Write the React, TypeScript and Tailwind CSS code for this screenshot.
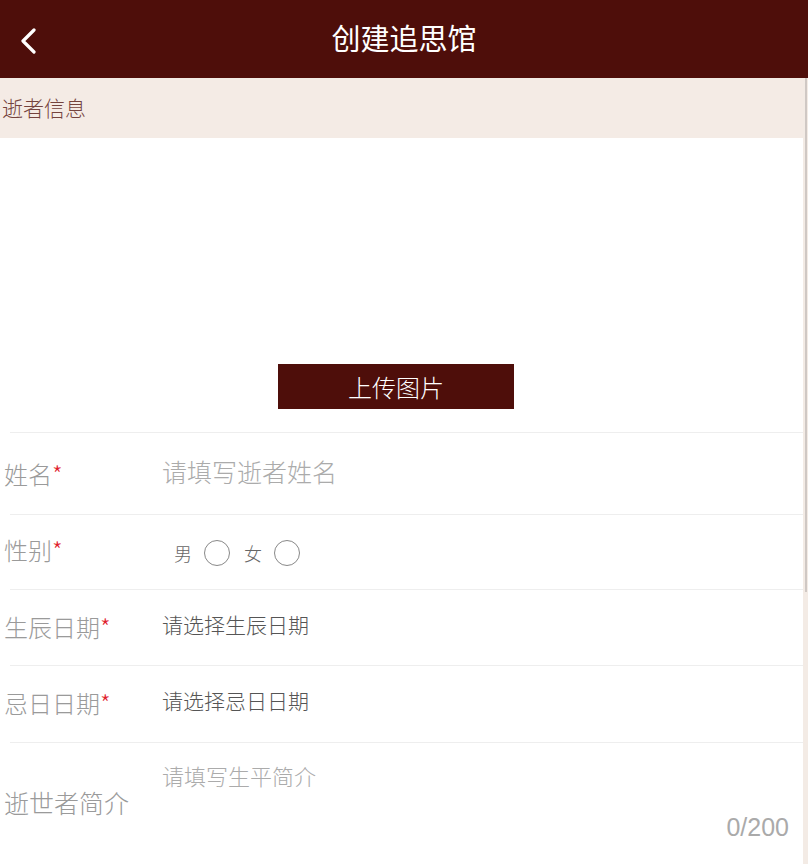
import { useState } from 'react';

const CJK = "font-['Noto_Sans_CJK_SC','Noto_Sans',sans-serif]";

function Label({ text, required }: { text: string; required?: boolean }) {
  return (
    <span className="w-[158px] shrink-0 pl-[4px] text-[24px] font-light text-[#9a9a9a]">
      {text}
      {required && <span className="text-[#e0202a]">*</span>}
    </span>
  );
}

function Radio({ label, checked, onClick }: { label: string; checked: boolean; onClick: () => void }) {
  return (
    <button type="button" onClick={onClick} className="flex items-center gap-[12px]">
      <span className="text-[18px] font-light text-[#666]">{label}</span>
      <span className="flex h-[26px] w-[26px] items-center justify-center rounded-full border border-[#888]">
        {checked && <span className="h-[14px] w-[14px] rounded-full bg-[#4e0e0a]" />}
      </span>
    </button>
  );
}

export default function App() {
  const [gender, setGender] = useState('');
  const [name, setName] = useState('');
  const [bio, setBio] = useState('');

  return (
    <div className={`${CJK} flex h-[864px] w-[808px] flex-col overflow-hidden bg-white`}>
      <header className="relative flex h-[78px] shrink-0 items-center justify-center bg-[#4e0e0a]">
        <button type="button" className="absolute left-[16px] top-[26px] p-[2px]">
          <svg width="22" height="26" viewBox="0 0 22 26" fill="none">
            <path d="M16 2 L5 13 L16 24" stroke="white" strokeWidth="3.2" strokeLinecap="round" strokeLinejoin="round" />
          </svg>
        </button>
        <h1 className="-mt-[2px] text-[29px] font-normal text-white">创建追思馆</h1>
      </header>

      <div className="flex min-h-0 flex-1">
        <main className="flex min-w-0 flex-1 flex-col">
          <div className="flex h-[60px] shrink-0 items-center bg-[#f4ebe5] pl-[2px] text-[21px] font-light text-[#74433d]">
            逝者信息
          </div>

          <div className="flex h-[294px] shrink-0 flex-col items-center justify-end pb-[23px] pr-[11px]">
            <button type="button" className="h-[45px] w-[236px] bg-[#4e0e0a] text-[24px] font-light text-white">
              上传图片
            </button>
          </div>

          <div className="ml-[10px] border-t border-[#eeeeee]" />
          <div className="flex h-[81px] items-center">
            <Label text="姓名" required />
            <input
              value={name}
              onChange={(e) => setName(e.target.value)}
              placeholder="请填写逝者姓名"
              className="-mt-[4px] min-w-0 flex-1 bg-transparent pl-[4px] text-[25px] font-light text-[#333] outline-none placeholder:text-[#ababab]"
            />
          </div>

          <div className="ml-[10px] border-t border-[#eeeeee]" />
          <div className="flex h-[74px] items-center pb-[4px]">
            <Label text="性别" required />
            <div className="flex items-center gap-[14px] pl-[16px] pt-[6px]">
              <Radio label="男" checked={gender === 'm'} onClick={() => setGender('m')} />
              <Radio label="女" checked={gender === 'f'} onClick={() => setGender('f')} />
            </div>
          </div>

          <div className="ml-[10px] border-t border-[#eeeeee]" />
          <div className="flex h-[75px] items-center pb-[2px]">
            <Label text="生辰日期" required />
            <span className="-mt-[4px] pl-[4px] text-[21px] font-light text-[#555]">请选择生辰日期</span>
          </div>

          <div className="ml-[10px] border-t border-[#eeeeee]" />
          <div className="flex h-[76px] items-center pb-[2px]">
            <Label text="忌日日期" required />
            <span className="-mt-[4px] pl-[4px] text-[21px] font-light text-[#555]">请选择忌日日期</span>
          </div>

          <div className="ml-[10px] border-t border-[#eeeeee]" />
          <div className="flex flex-1 items-start">
            <span className="mt-[41px] w-[158px] shrink-0 pl-[4px] text-[25px] font-light text-[#9a9a9a]">
              逝世者简介
            </span>
            <div className="flex flex-1 flex-col pr-[14px] pt-[16px]">
              <textarea
                value={bio}
                maxLength={200}
                onChange={(e) => setBio(e.target.value)}
                placeholder="请填写生平简介"
                className="h-[50px] resize-none bg-transparent pl-[4px] text-[22px] font-light text-[#333] outline-none placeholder:text-[#ababab]"
              />
              <span className="self-end font-['Liberation_Sans',sans-serif] text-[25px] text-[#aaaaaa]">
                {bio.length}/200
              </span>
            </div>
          </div>
        </main>

        <aside className="flex w-[5px] shrink-0 justify-end bg-[#f3ebe5]">
          <div className="mr-[1px] h-[514px] w-[2px] bg-[#cfc8c4]" />
        </aside>
      </div>
    </div>
  );
}
